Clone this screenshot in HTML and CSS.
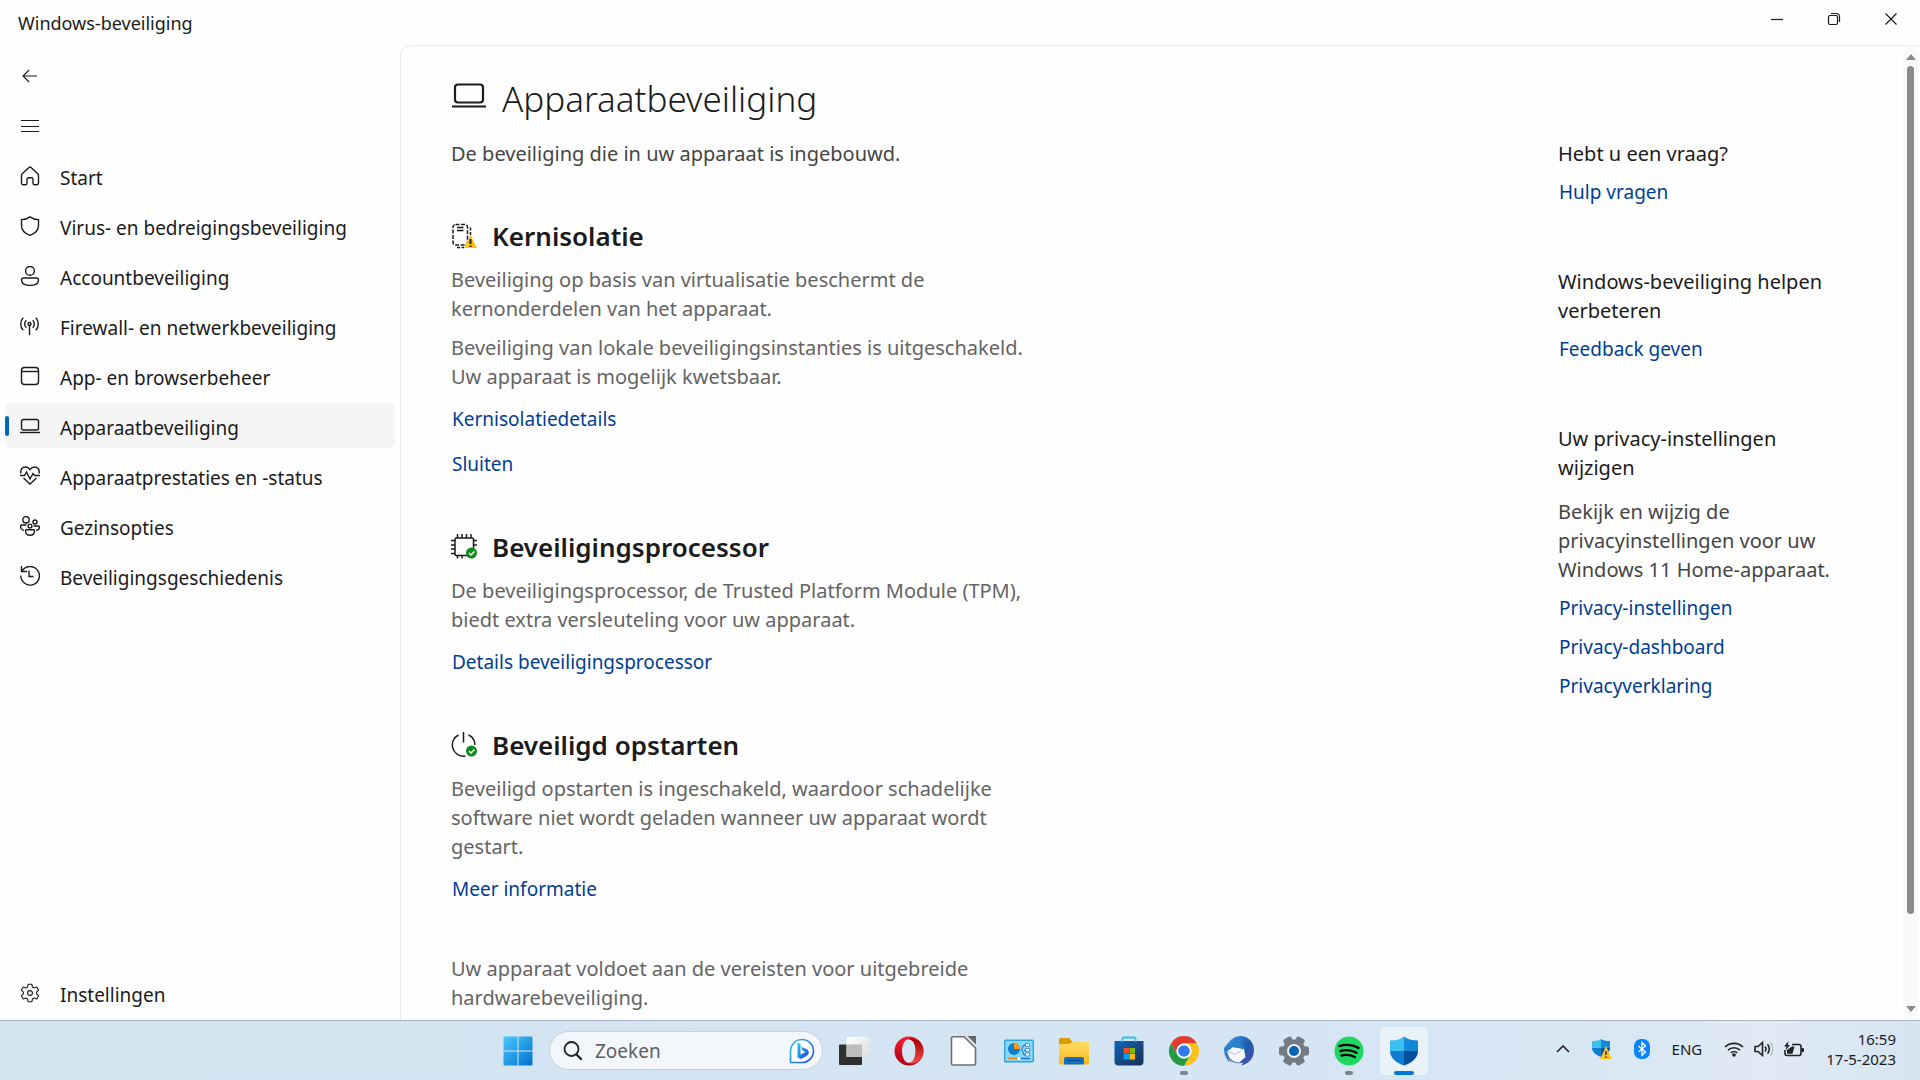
FILE: index.html
```html
<!DOCTYPE html>
<html lang="nl">
<head>
    <meta charset="UTF-8">
    <meta name="viewport" content="width=device-width, initial-scale=1.0">
    <title>Windows-beveiliging</title>
    <link rel="stylesheet" href="styles.css">
</head>
<body>

<div class="window">
    <header class="titlebar">
        <span class="app-name">Windows-beveiliging</span>
        <div class="window-buttons">
            <button aria-label="Minimaliseren"><svg width="14" height="14" viewBox="0 0 14 14"><path d="M1 7.5h12"/></svg></button>
            <button aria-label="Verkleinen"><svg width="14" height="14" viewBox="0 0 14 14"><rect x="1.5" y="3.5" width="9" height="9" rx="1.5"/><path d="M4 1.5h5.5a3 3 0 0 1 3 3V10"/></svg></button>
            <button aria-label="Sluiten"><svg width="14" height="14" viewBox="0 0 14 14"><path d="M1.5 1.5l11 11M12.5 1.5l-11 11"/></svg></button>
        </div>
    </header>

    <div class="body">
        <nav class="sidebar">
            <button class="nav-item" aria-label="Terug"><svg class="icon thin" viewBox="0 0 20 20"><path d="M17 10H3M9 4l-6 6 6 6"/></svg></button>
            <button class="nav-item" aria-label="Menu"><svg class="icon thin" viewBox="0 0 20 20"><path d="M1 4.5h18M1 10.5h18M1 15.5h18"/></svg></button>
            <a class="nav-item" href="#start"><svg class="icon" viewBox="0 0 20 20"><path d="M9 1.4a1.5 1.5 0 0 1 2 0l6.500 6.200a3 3 0 0 1 1 2V17a1.700 1.700 0 0 1-1.700 1.700h-2.400A1.400 1.400 0 0 1 13 17.300v-4.100a1.500 1.500 0 0 0-1.500-1.500h-3A1.500 1.500 0 0 0 7 13.200v4.100a1.400 1.400 0 0 1-1.400 1.400H3.200A1.700 1.700 0 0 1 1.500 17V9.600a3 3 0 0 1 1-2z"/></svg>Start</a>
            <a class="nav-item" href="#virus"><svg class="icon" viewBox="0 0 20 20"><path d="M10 .9c2.300 1.800 5 2.700 8.500 2.700V9.500c0 4.700-2.700 7.800-8.500 9.800-5.800-2-8.500-5.100-8.500-9.800V3.600C5 3.600 7.700 2.700 10 .9z"/></svg>Virus- en bedreigingsbeveiliging</a>
            <a class="nav-item" href="#account"><svg class="icon" viewBox="0 0 20 20"><circle cx="10" cy="4.900" r="4.400"/><path d="M3.500 12h13a2 2 0 0 1 2 2c0 3.500-3.500 5.400-8.500 5.400S1.500 17.500 1.500 14a2 2 0 0 1 2-2z"/></svg>Accountbeveiliging</a>
            <a class="nav-item" href="#firewall"><svg class="icon" viewBox="0 0 20 20"><circle cx="9.500" cy="8" r="1.500"/><path d="M9.500 9.500V19M3.200 1.800a9 9 0 0 0 0 12.400M15.800 1.800a9 9 0 0 1 0 12.400M6.300 4.200a5.300 5.300 0 0 0 0 7.600M12.700 4.200a5.300 5.300 0 0 1 0 7.600"/></svg>Firewall- en netwerkbeveiliging</a>
            <a class="nav-item" href="#app"><svg class="icon" viewBox="0 0 20 20"><rect x="1.500" y="1.500" width="17" height="17" rx="3"/><path d="M1.500 5.500h17"/></svg>App- en browserbeheer</a>
            <a class="nav-item active" href="#apparaat"><svg class="icon" viewBox="0 0 20 20"><rect x="1.500" y="3.500" width="17" height="10.500" rx="2"/><path d="M0 16.500h20"/></svg>Apparaatbeveiliging</a>
            <a class="nav-item" href="#status"><svg class="icon" viewBox="0 0 20 20"><path d="M1 7.500C0 3.500 2.500 1 5.300 1 7.500 1 9 2.200 10 3.700 11 2.200 12.500 1 14.700 1 17.500 1 20 3.500 19 7.500M0 9.500h4.500l2-3.500 3.500 7 3-5.500 1.500 2H20M3.500 12l6.500 6 6.500-6"/></svg>Apparaatprestaties en -status</a>
            <a class="nav-item" href="#gezin"><svg class="icon" viewBox="0 0 20 20"><circle cx="6" cy="3.800" r="3.200"/><circle cx="15" cy="6" r="2"/><circle cx="10" cy="10" r="1.900"/><path d="M6.500 9H2a1.400 1.400 0 0 0-1.400 1.400c0 2.300 1.200 3.600 3.400 4M13.500 10H18a1.400 1.400 0 0 1 1.400 1.400c0 1.600-1.200 2.800-3.400 3M6.600 13.800h6.800c.7 0 1.100.5 1.100 1.200 0 2.700-1.800 4.300-4.500 4.300S5.500 17.700 5.500 15c0-.7.400-1.200 1.100-1.200z"/></svg>Gezinsopties</a>
            <a class="nav-item" href="#geschiedenis"><svg class="icon" viewBox="0 0 20 20"><path d="M1.500 0v5.500H7M2 5.200A9.300 9.300 0 1 1 .8 9.500M9 4.500V10.500h4.500"/></svg>Beveiligingsgeschiedenis</a>
            <a class="nav-item settings" href="#instellingen"><svg class="icon thin" viewBox="0 0 20 20"><path d="M8.200 1.200h3.600l.7 2.800 1.600.9 2.700-.9 1.900 3.200-2.100 2v1.600l2.100 2-1.900 3.200-2.700-.9-1.600.9-.7 2.800H8.200L7.500 16l-1.600-.9-2.700.9-1.900-3.200 2.100-2V9.200l-2.100-2L3.200 4l2.700.9L7.500 4z" stroke-linejoin="round"/><circle cx="10" cy="10" r="2.400"/></svg>Instellingen</a>
        </nav>

        <main class="content">
            <div class="page">
                <h1><svg width="34" height="26" viewBox="0 0 34 26"><rect x="3" y="1.500" width="28" height="18" rx="3"/><path d="M0 23.500h34"/></svg>Apparaatbeveiliging</h1>
                <div class="columns">
                    <div class="main-column">
                        <p class="intro">De beveiliging die in uw apparaat is ingebouwd.</p>

                        <section>
                            <h2>
                                <svg width="26" height="26" viewBox="0 0 26 26"><rect x="2" y="1.500" width="14.500" height="20.500" rx="2.500" stroke-dasharray="4 1.500"/><path d="M6 4.500h6.500M6 7.500h6.500"/><path d="M19.500 4.500v10M6 24.500h7" stroke-dasharray="3 1.500"/><path class="warn" d="M19.500 12L26 25H13z"/><path d="M19.500 16v5M19.500 22.500V24" stroke-width="2"/></svg>
                                Kernisolatie
                            </h2>
                            <p>Beveiliging op basis van virtualisatie beschermt de kernonderdelen van het apparaat.</p>
                            <p>Beveiliging van lokale beveiligingsinstanties is uitgeschakeld. Uw apparaat is mogelijk kwetsbaar.</p>
                            <div class="links">
                                <a href="#kernisolatie">Kernisolatiedetails</a>
                                <a href="#sluiten">Sluiten</a>
                            </div>
                        </section>

                        <section>
                            <h2>
                                <svg width="26" height="26" viewBox="0 0 26 26"><rect x="4" y="4" width="18.500" height="17.500" rx="1.500"/><path d="M6.500 0v4M11 0v4M15.500 0v4M20 0v4M6.500 21.500v3M11 21.500v3M0 6.500h4M0 11h4M0 15h4M0 19.500h4M22 6.500h4M22 11h4"/><circle class="ok" cx="20.500" cy="19" r="5.500"/><path class="tick" d="M18 19l2 2 3.500-3.500"/></svg>
                                Beveiligingsprocessor
                            </h2>
                            <p>De beveiligingsprocessor, de Trusted Platform Module (TPM), biedt extra versleuteling voor uw apparaat.</p>
                            <div class="links">
                                <a href="#processor">Details beveiligingsprocessor</a>
                            </div>
                        </section>

                        <section>
                            <h2>
                                <svg width="26" height="26" viewBox="0 0 26 26"><path d="M12.500 0v10.500M7.500 3A11.200 11.200 0 0 0 12.500 24.200h2M17.500 3A11 11 0 0 1 24 13"/><circle class="ok" cx="20.500" cy="19" r="5.500"/><path class="tick" d="M18 19l2 2 3.500-3.500"/></svg>
                                Beveiligd opstarten
                            </h2>
                            <p>Beveiligd opstarten is ingeschakeld, waardoor schadelijke software niet wordt geladen wanneer uw apparaat wordt gestart.</p>
                            <div class="links">
                                <a href="#meer">Meer informatie</a>
                            </div>
                        </section>

                        <section>
                            <p>Uw apparaat voldoet aan de vereisten voor uitgebreide hardwarebeveiliging.</p>
                        </section>
                    </div>

                    <aside class="side-column">
                        <div class="group">
                            <h3>Hebt u een vraag?</h3>
                            <a href="#hulp">Hulp vragen</a>
                        </div>
                        <div class="group">
                            <h3>Windows-beveiliging helpen verbeteren</h3>
                            <a href="#feedback">Feedback geven</a>
                        </div>
                        <div class="group">
                            <h3>Uw privacy-instellingen wijzigen</h3>
                            <p>Bekijk en wijzig de privacyinstellingen voor uw Windows 11 Home-apparaat.</p>
                            <a href="#privacy">Privacy-instellingen</a>
                            <a href="#dashboard">Privacy-dashboard</a>
                            <a href="#verklaring">Privacyverklaring</a>
                        </div>
                    </aside>
                </div>
            </div>

            <div class="scrollbar">
                <svg width="10" height="6" viewBox="0 0 10 6"><path d="M5 0l5 6H0z"/></svg>
                <div class="thumb"></div>
                <svg width="10" height="6" viewBox="0 0 10 6"><path d="M0 0h10L5 6z"/></svg>
            </div>
        </main>
    </div>
</div>

<footer class="taskbar">
    <div class="apps">
        <button class="app" aria-label="Start">
            <svg width="30" height="30" viewBox="0 0 30 30"><defs><linearGradient id="win" x1="0" y1="0" x2="1" y2="1"><stop offset="0" stop-color="#4cc9fb"/><stop offset="1" stop-color="#0070cf"/></linearGradient></defs><path fill="url(#win)" d="M1.500.5H14.500v14H.5v-13a1 1 0 0 1 1-1zM15.500.5h13a1 1 0 0 1 1 1v13h-14zM.5 15.500h14v14h-13a1 1 0 0 1-1-1zM15.500 15.500h14v13a1 1 0 0 1-1 1h-13z"/></svg>
        </button>
        <label class="search">
            <svg width="20" height="20" viewBox="0 0 20 20"><circle cx="8.500" cy="8" r="7" fill="none" stroke="#222" stroke-width="1.800"/><path d="M13.500 13.500l4.500 4.500" stroke="#222" stroke-width="2.400" stroke-linecap="round"/></svg>
            <input type="text" placeholder="Zoeken" aria-label="Zoeken">
            <svg width="26" height="26" viewBox="0 0 26 26"><defs><linearGradient id="bing" x1="0" y1="0" x2="1" y2="1"><stop offset="0" stop-color="#35c6f4"/><stop offset="1" stop-color="#1b4ad5"/></linearGradient></defs><path d="M1.500 24.500V13A11.500 11.500 0 1 1 13 24.500z" fill="#fff" stroke="url(#bing)" stroke-width="1.600"/><path d="M8.500 4.500l3 1.500v10.500l5-2.500-3-1.500-1.500-3.500 5 1.800c2 .8 2.700 2 2.700 3.700 0 1.600-.8 2.700-2.200 3.500l-4.300 2.500c-.9.500-1.800.5-2.700 0L8.500 19z" fill="url(#bing)"/></svg>
        </label>
        <button class="app" aria-label="Taakweergave">
            <svg width="30" height="30" viewBox="0 0 30 30"><defs><linearGradient id="tv" x1="0" y1="0" x2="1" y2="1"><stop offset="0" stop-color="#fff"/><stop offset="1" stop-color="#ddd"/></linearGradient></defs><rect y="8.500" width="23" height="20.500" rx="1" fill="#2f2f2f"/><rect x="7.500" y="1" width="22.500" height="20" rx="1" fill="url(#tv)"/><path d="M7.500 8.500H23V21H7.500z" fill="#bdbdbd"/></svg>
        </button>
        <button class="app" aria-label="Opera">
            <svg width="30" height="30" viewBox="0 0 30 30"><defs><linearGradient id="op" x1="0" y1="0" x2="0" y2="1"><stop offset="0" stop-color="#ff1b2d"/><stop offset="1" stop-color="#a70014"/></linearGradient><linearGradient id="op2" x1="0" y1="0" x2="0" y2="1"><stop offset="0" stop-color="#9c0000"/><stop offset="1" stop-color="#ff4b4b"/></linearGradient></defs><path fill="url(#op)" fill-rule="evenodd" d="M15 .5a14.500 14.500 0 1 0 0 29 14.500 14.500 0 0 0 0-29zM15 3c4 0 6.500 5.500 6.500 12S19 27 15 27 8 21.500 8 15 11 3 15 3z"/><path fill="url(#op2)" d="M14 3.200c4-2 10 0 12.500 3.500 4 5 4 11.600 0 16.600C24 26.800 18 28.800 14 26.800c4.500.2 8-4.800 8-11.800S18.500 3 14 3.200z"/></svg>
        </button>
        <button class="app" aria-label="LibreOffice">
            <svg width="30" height="30" viewBox="0 0 30 30"><path d="M4 .8h11L26.500 12v15.500a1.500 1.500 0 0 1-1.500 1.500H4a1.500 1.500 0 0 1-1.500-1.500v-25A1.500 1.500 0 0 1 4 .8z" fill="#fff" stroke="#6f6f6f" stroke-width="1.600"/><path d="M18.500 0H27v8.500z" fill="#666"/></svg>
        </button>
        <button class="app" aria-label="Configuratiescherm">
            <svg width="30" height="30" viewBox="0 0 30 30"><rect x=".7" y="4.200" width="28.600" height="21.600" rx="1" fill="#86d8fa" stroke="#2ba5dc" stroke-width="1.400"/><circle cx="10" cy="13" r="6" fill="#0b7fd0"/><path d="M10 13V6.500a6.500 6.500 0 0 1 6 6.500z" fill="#ff9416"/><path d="M17 14l3-5h3M20 14.500h3M18 14l2 5h3" stroke="#1268b8" fill="none"/><path d="M21.500 7.500h4v3h-4zM21.500 12.500h4v3h-4zM21.500 17h4v3h-4z" fill="#e9f8ff" stroke="#1268b8" stroke-width=".6"/><path d="M4 22.500h11" stroke="#e98113" stroke-width="1.400"/><path d="M15 22.500h11" stroke="#1773c4" stroke-width="1.400"/><circle cx="15" cy="22.500" r="1.500" fill="#fff"/></svg>
        </button>
        <button class="app" aria-label="Verkenner">
            <svg width="30" height="30" viewBox="0 0 30 30"><defs><linearGradient id="fo" x1="0" y1="0" x2="0" y2="1"><stop offset="0" stop-color="#ffdc66"/><stop offset="1" stop-color="#fbb91e"/></linearGradient></defs><path d="M1.500 2H10l3.500 3.500v7H0v-9A1.500 1.500 0 0 1 1.500 2z" fill="#dc9c05"/><path d="M1 8h9.500L14 5.500h14.500A1.500 1.500 0 0 1 30 7v20.500a1 1 0 0 1-1 1H1a1 1 0 0 1-1-1V9a1 1 0 0 1 1-1z" fill="url(#fo)"/><path d="M7 21h16a2 2 0 0 1 2 2v5.500H5V23a2 2 0 0 1 2-2z" fill="#0d72c7"/><path d="M8 24.500h14" stroke="#064b91" stroke-width="1.400"/></svg>
        </button>
        <button class="app" aria-label="Microsoft Store">
            <svg width="30" height="30" viewBox="0 0 30 30"><defs><linearGradient id="st" x1="0" y1="0" x2="1" y2="1"><stop offset="0" stop-color="#0e66b8"/><stop offset="1" stop-color="#1c2d55"/></linearGradient></defs><path d="M.5 5h29v20.500a4 4 0 0 1-4 4h-21a4 4 0 0 1-4-4z" fill="url(#st)"/><path d="M8.500 6V2.500a1 1 0 0 1 1-1h11a1 1 0 0 1 1 1V6" fill="none" stroke="#2cc0f5" stroke-width="1.800"/><path d="M9.500 12H15v5.500H9.500z" fill="#f25022"/><path d="M15.500 12H21v5.500h-5.500z" fill="#7fba00"/><path d="M9.500 18H15v5.500H9.500z" fill="#00a4ef"/><path d="M15.500 18H21v5.500h-5.500z" fill="#ffb900"/></svg>
        </button>
        <button class="app running" aria-label="Chrome">
            <svg width="30" height="30" viewBox="0 0 30 30"><path d="M2 7.500A15 15 0 0 1 28 7.500H15a7.500 7.500 0 0 0-6.500 11.200z" fill="#e33b2e"/><path d="M28 7.500A15 15 0 0 1 15 30l6.500-11.200A7.500 7.500 0 0 0 15 7.500z" fill="#fcc31e"/><path d="M2 7.500A15 15 0 0 0 15 30l6.500-11.200a7.500 7.500 0 0 1-13 0z" fill="#249a47"/><circle cx="15" cy="15" r="7.500" fill="#fff"/><circle cx="15" cy="15" r="5.800" fill="#3078ed"/></svg>
        </button>
        <button class="app" aria-label="Thunderbird">
            <svg width="30" height="30" viewBox="0 0 30 30"><defs><linearGradient id="tb" x1="0" y1="0" x2="1" y2="1"><stop offset="0" stop-color="#3aa5e4"/><stop offset=".5" stop-color="#1d5fae"/><stop offset="1" stop-color="#4a49ad"/></linearGradient></defs><path d="M5 6C8 2 12 0 16 0c8 0 14 6 14 14 0 8-5 14-13 15.500 1-1 2-2 2-3C11 29 4 24 2 18 1 13 2 9 5 6z" fill="url(#tb)"/><path d="M0 12l4-5-1 9c0 5 2 9 5 10.500C3 25 0 20 0 12z" fill="#2b83cc"/><path d="M3 15.500L9 11l11 2 1.500 8-6 5.500c-5 0-8.500-2-10.500-5.500z" fill="#f5f7fb"/><path d="M3.500 15.500l8 3 8.500-6" fill="none" stroke="#b5c3d6"/><path d="M9 8c2-4 7-6 11-4-3 0-5 1-5 3 2 0 5 3 5 6L9 11z" fill="#2b7fca"/><path d="M3 22c1 3 3 4 6 4.500L4 25z" fill="#34175e"/></svg>
        </button>
        <button class="app" aria-label="Instellingen">
            <svg width="30" height="30" viewBox="0 0 30 30"><g fill="#747b83"><circle cx="15" cy="15" r="11.500"/><rect y="10.500" width="30" height="9" rx="2"/><rect y="10.500" width="30" height="9" rx="2" transform="rotate(60 15 15)"/><rect y="10.500" width="30" height="9" rx="2" transform="rotate(120 15 15)"/></g><circle cx="15" cy="15" r="7" fill="#eef3f8"/><circle cx="15" cy="15" r="5" fill="#0b63b4"/></svg>
        </button>
        <button class="app running" aria-label="Spotify">
            <svg width="30" height="30" viewBox="0 0 30 30"><circle cx="15" cy="15" r="14.500" fill="#1ed760"/><path d="M5.500 10c6-1.800 13.500-1.200 19 1.900M6.500 15c5-1.500 11-.9 16 1.700M7.500 19.500c4.500-1.200 9-.7 13.500 1.500" fill="none" stroke="#000" stroke-width="2.400" stroke-linecap="round"/></svg>
        </button>
        <button class="app current" aria-label="Windows-beveiliging">
            <svg width="30" height="30" viewBox="0 0 30 30"><path d="M15 .5C11 3.500 6.500 4.500 1 4.500V15h14z" fill="#3cc0f0"/><path d="M15 .5c4 3 8.500 4 14 4V15H15z" fill="#138ad8"/><path d="M1 15h14v14.500C7.500 27 1 22 1 15z" fill="#0f7ed2"/><path d="M29 15H15v14.500C22.500 27 29 22 29 15z" fill="#06509f"/></svg>
        </button>
    </div>

    <div class="tray">
        <button aria-label="Verborgen pictogrammen"><svg width="14" height="8" viewBox="0 0 14 8"><path class="line" d="M1 7l6-6 6 6"/></svg></button>
        <button aria-label="Beveiligingsstatus"><svg width="20" height="22" viewBox="0 0 20 22"><path d="M9 1C6.500 2.500 4 3 0 3v7h9z" fill="#3cc0f0"/><path d="M9 1c2.500 1.500 5 2 9 2v7H9z" fill="#138ad8"/><path d="M0 10h9v9C4 17 0 14 0 10z" fill="#0f7ed2"/><path d="M18 10H9v9c5-2 9-5 9-9z" fill="#06509f"/><path d="M14 8l6 13H8z" fill="#ffc21a"/><path d="M14 13v4M14 18.500V20" stroke="#222" stroke-width="1.400"/></svg></button>
        <button aria-label="Bluetooth"><svg width="16" height="20" viewBox="0 0 16 20"><rect width="16" height="20" rx="7" fill="#0a84ff"/><path d="M4.500 7l7 6L8 16.500v-13L11.500 7l-7 6" fill="none" stroke="#fff" stroke-width="1.300"/></svg></button>
        <button class="lang">ENG</button>
        <button class="status" aria-label="Netwerk, geluid en batterij">
            <svg width="20" height="16" viewBox="0 0 20 16"><path class="line" d="M1 6a13 13 0 0 1 18 0M4 9.200a8.700 8.700 0 0 1 12 0M6.800 12a4.700 4.700 0 0 1 6.400 0"/><circle cx="10" cy="14" r="1.800" fill="#222"/></svg>
            <svg width="20" height="16" viewBox="0 0 20 16"><path class="line" d="M1 5.500h3L8.500 1.500v13L4 10.500H1zM11 5.500a4 4 0 0 1 0 5M13.500 3.300a7 7 0 0 1 0 9.400"/><path d="M16.500 1.500a10 10 0 0 1 0 13" fill="none" stroke="#b3bcc4" stroke-width="1.400"/></svg>
            <svg width="20" height="16" viewBox="0 0 20 16"><path class="line" d="M8 3.500h7a2 2 0 0 1 2 2v7a2 2 0 0 1-2 2H3a2 2 0 0 1-2-2V9"/><path d="M17.500 7H19a1 1 0 0 1 1 1v2a1 1 0 0 1-1 1h-1.500zM3 9l5-3.500h2.500L8.500 12.800H3zM4.500 0L0 5.500h2.500L1.500 9.500 6 4H3.800z" fill="#222"/></svg>
        </button>
        <button class="clock">16:59<br>17-5-2023</button>
    </div>
</footer>

</body>
</html>
```

FILE: styles.css
```css
* {
    box-sizing: border-box;
}
body {
    margin: 0;
    height: 100vh;
    display: flex;
    flex-direction: column;
    overflow: hidden;
    background-color: #fefefe;
    color: #1b1b1b;
    font-family: "Noto Sans", "Open Sans", sans-serif;
    font-size: 19px;
}
h1, h2, h3, p {
    margin: 0;
}
button {
    background: none;
    border: none;
    padding: 0;
    color: inherit;
    font: inherit;
}
a {
    text-decoration: none;
}
svg {
    display: block;
    flex-shrink: 0;
}

/* window */
.window {
    flex: 1;
    min-height: 0;
    display: flex;
    flex-direction: column;
}
.titlebar {
    display: flex;
    justify-content: space-between;
    height: 45px;
    padding: 0 1px 0 18px;
}
.app-name {
    font-size: 18px;
    line-height: 47px;
}
.window-buttons {
    display: flex;
    height: 38px;
}
.window-buttons button {
    width: 57px;
    display: grid;
    place-items: center;
}
.window-buttons svg {
    fill: none;
    stroke: #1b1b1b;
    stroke-width: 1.2;
}
.body {
    flex: 1;
    min-height: 0;
    display: flex;
}

/* navigation */
.sidebar {
    width: 400px;
    padding: 8px 5px 5px;
    display: flex;
    flex-direction: column;
    gap: 5px;
}
.nav-item {
    height: 45px;
    display: flex;
    align-items: center;
    gap: 20px;
    padding: 5px 0 0 15px;
    border-radius: 6px;
    color: #1b1b1b;
    font-size: 19px;
}
.icon {
    width: 20px;
    height: 20px;
    margin-bottom: 4px;
    fill: none;
    stroke: #1b1b1b;
    stroke-width: 1.4;
}
.thin {
    stroke-width: 1.1;
}
.active {
    position: relative;
    background-color: #f5f5f5;
}
.active::before {
    content: "";
    position: absolute;
    left: 0;
    top: 13px;
    width: 4px;
    height: 20px;
    border-radius: 2px;
    background-color: #0067c0;
}
.settings {
    margin-top: auto;
}

/* page */
.content {
    flex: 1;
    display: flex;
    border: 1px solid #ececec;
    border-width: 1px 0 0 1px;
    border-top-left-radius: 10px;
}
.page {
    flex: 1;
    padding: 26px 53px 0 50px;
    overflow: hidden;
}
h1 {
    display: flex;
    align-items: center;
    gap: 16px;
    height: 52px;
    padding-left: 1px;
    font-size: 35px;
    font-weight: 300;
}
h1 svg {
    margin-bottom: 4px;
    fill: none;
    stroke: #1b1b1b;
    stroke-width: 2.2;
}
.columns {
    display: flex;
    justify-content: space-between;
    padding-top: 15px;
    font-size: 20px;
    line-height: 29px;
}
.main-column {
    width: 592px;
}
.intro {
    color: #454545;
}
section {
    margin-top: 51px;
    color: #646464;
}
.intro + section {
    margin-top: 50px;
}
h2 {
    display: flex;
    align-items: center;
    gap: 15px;
    margin-bottom: 11px;
    color: #1b1b1b;
    font-size: 26px;
    font-weight: 600;
    line-height: 36px;
}
h2 svg {
    fill: none;
    stroke: #1b1b1b;
    stroke-width: 1.5;
}
h2 .warn {
    fill: #ffc20e;
    stroke: none;
}
h2 .ok {
    fill: #0f8a1c;
    stroke: none;
}
h2 .tick {
    stroke: #fff;
}
section p + p {
    margin-top: 10px;
}
.links {
    display: flex;
    flex-direction: column;
    align-items: flex-start;
    gap: 18px;
    margin-top: 15px;
}
.columns a {
    padding-left: 1px;
    color: #003e92;
    font-size: 19px;
    line-height: 27px;
}
.side-column {
    width: 290px;
}
.group {
    display: flex;
    flex-direction: column;
    align-items: flex-start;
    margin-bottom: 61px;
}
h3 {
    font-size: 20px;
    font-weight: 400;
}
.group p {
    margin-top: 15px;
    color: #454545;
}
.group a {
    margin-top: 11px;
}
.group a + a {
    margin-top: 12px;
}
.scrollbar {
    width: 15px;
    margin: 1px 2px;
    padding: 7px 0;
    display: flex;
    flex-direction: column;
    align-items: center;
    gap: 6px;
    border-radius: 8px;
    background-color: #f9f9f9;
    fill: #8a8a8a;
}
.thumb {
    flex: 1;
    width: 7px;
    margin-bottom: 86px;
    border-radius: 4px;
    background-color: #8a8a8a;
}

/* taskbar */
.taskbar {
    position: relative;
    display: flex;
    justify-content: center;
    align-items: center;
    height: 60px;
    border-top: 1px solid #a9b5c1;
    background: linear-gradient(90deg, #d3e4f1, #d5e5f3 60%, #d6e6f3 80%, #e0eaf5 92%, #d5e5f1);
}
.apps {
    display: flex;
    align-items: center;
    gap: 7px;
    padding-left: 2px;
}
.app {
    position: relative;
    width: 48px;
    height: 48px;
    display: grid;
    place-items: center;
    border-radius: 5px;
}
.current {
    background-color: #e9f1f9;
}
.running::after, .current::after {
    content: "";
    position: absolute;
    bottom: 0;
    left: 20px;
    width: 8px;
    height: 4px;
    border-radius: 2px;
    background-color: #7c858d;
}
.current::after {
    left: 14px;
    width: 20px;
    background-color: #0078d4;
}
.search {
    width: 274px;
    height: 39px;
    display: flex;
    align-items: center;
    gap: 12px;
    padding: 0 7px 0 13px;
    border: 1px solid #c5d1dc;
    border-radius: 20px;
    background-color: #f3f7fc;
}
.search input {
    flex: 1;
    min-width: 0;
    padding: 0;
    border: none;
    outline: none;
    background: none;
    font: inherit;
    font-size: 19px;
}
.search input::placeholder {
    color: #5d6064;
}
.tray {
    position: absolute;
    right: 24px;
    top: 0;
    height: 100%;
    padding-bottom: 3px;
    display: flex;
    align-items: center;
    gap: 22px;
    color: #1b1b1b;
    font-size: 15px;
}
.line {
    fill: none;
    stroke: #222;
    stroke-width: 1.6;
}
.status {
    display: flex;
    gap: 10px;
}
.clock {
    line-height: 20px;
    text-align: right;
}
```
